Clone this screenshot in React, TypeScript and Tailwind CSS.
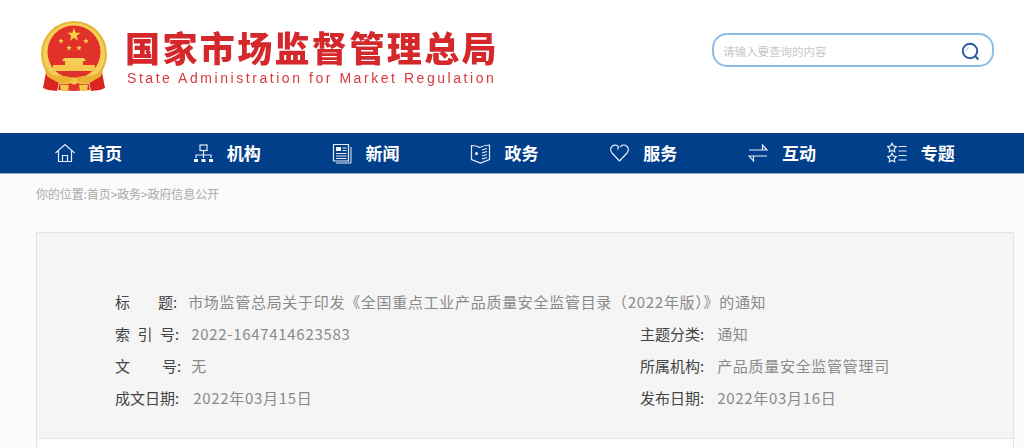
import React from "react";

const CJK = `"Noto Sans CJK SC", "Liberation Sans", sans-serif`;

function Star({ x, y, r, fill = "#f7d34a" }: { x: number; y: number; r: number; fill?: string }) {
  const pts: string[] = [];
  for (let i = 0; i < 10; i++) {
    const a = (Math.PI / 5) * i - Math.PI / 2;
    const rr = i % 2 === 0 ? r : r * 0.4;
    pts.push(`${(x + rr * Math.cos(a)).toFixed(2)},${(y + rr * Math.sin(a)).toFixed(2)}`);
  }
  return <polygon points={pts.join(" ")} fill={fill} />;
}

function Emblem() {
  return (
    <svg width="68" height="72" viewBox="0 0 68 72" className="shrink-0 blur-[0.4px]">
      <path d="M6 52c5 3 9 6 13 10l-2 9-9-1-5-2z" fill="#d9261f" />
      <path d="M62 52c-5 3-9 6-13 10l2 9 9-1 5-2z" fill="#d9261f" />
      <circle cx="34" cy="34" r="33" fill="#e6b335" />
      <circle cx="34" cy="34" r="31" fill="#f5cf58" />
      <circle cx="34" cy="32" r="26.5" fill="#e0322a" />
      <Star x={34} y={15} r={7} />
      <Star x={21} y={21} r={3} />
      <Star x={46} y={21} r={3} />
      <Star x={29} y={28} r={3} />
      <Star x={39} y={28} r={3} />
      <path d="M24 38h20l2 3H22z" fill="#f6cf55" />
      <rect x="25" y="41" width="18" height="4" fill="#f6cf55" />
      <rect x="13" y="45" width="42" height="6" fill="#f4c94d" />
      <path d="M5 50c6 5 13 7 20 6l9 2 9-2c7 1 14-1 20-6l-2 6c-5 4-12 7-19 7l-8-1-8 1c-7 0-14-3-19-7z" fill="#e9b233" />
      <path d="M19 64c5 1 10 0 15-2 5 2 10 3 15 2l1 6-16 1-16-1z" fill="#e3342a" />
      <path d="M20 65h9l-1 6h-7zM39 65h9l-1 6h-7z" fill="#f2c84b" />
      <circle cx="34" cy="61" r="3.5" fill="#f2c84b" />
    </svg>
  );
}

const iconProps = {
  width: 22,
  height: 22,
  viewBox: "0 0 22 22",
  fill: "none",
  stroke: "#e4ecf6",
  strokeWidth: 1.2,
};

function HomeIcon() {
  return (
    <svg {...iconProps}>
      <path d="M1.5 11L11 2.5l9.5 8.5" />
      <path d="M4.5 9v10.500h13V9" />
      <path d="M8.5 19.500v-6h5v6" />
    </svg>
  );
}
function OrgIcon() {
  return (
    <svg {...iconProps}>
      <rect x="7" y="3" width="7" height="5.5" />
      <path d="M10.5 8.500V16M3 16v-3h15v3" />
      <rect x="1" y="17" width="4" height="3" fill="#f2f6fb" stroke="none" />
      <rect x="8.5" y="17" width="4" height="3" fill="#f2f6fb" stroke="none" />
      <rect x="16" y="17" width="4" height="3" fill="#f2f6fb" stroke="none" />
    </svg>
  );
}
function NewsIcon() {
  return (
    <svg {...iconProps}>
      <path d="M1.5 2.500h15v16.500h-15z" />
      <path d="M19 5v16H4" strokeWidth="1" />
      <rect x="4" y="5" width="5" height="4" fill="#f2f6fb" stroke="none" />
      <path d="M10.5 6h4M10.500 8.500h4M4 11.500h10.500M4 14h10.500M4 16.500h10.500" />
    </svg>
  );
}
function GovIcon() {
  return (
    <svg {...iconProps}>
      <path d="M1.5 3.500c3 0 6 .5 8 2 3-1.500 7-2.500 10-2.500v14.500L10.500 21l-9-3.500z" />
      <circle cx="6.5" cy="11.5" r="1.5" fill="#f2f6fb" stroke="none" />
      <path d="M12 8l5-1.500M12 11l5-1.500M12 14l5-1.500M12 17l5-1.500" />
    </svg>
  );
}
function HeartIcon() {
  return (
    <svg {...iconProps}>
      <path d="M10.5 19L3 11c-2-2.300-1.700-5.200.2-6.800 2.100-1.600 5-1.400 6.500.9L8.500 7.500M10.500 19L18 11c2-2.300 1.700-5.200-.2-6.800-2-1.600-4.800-1.400-6.500.6" />
    </svg>
  );
}
function SwapIcon() {
  return (
    <svg {...iconProps}>
      <path d="M1 8h18L14.500 3v5" />
      <path d="M19 14H1l4.500 5v-5" />
    </svg>
  );
}
function StarListIcon() {
  const outline = (cy: number) => {
    const pts: string[] = [];
    for (let i = 0; i < 10; i++) {
      const a = (Math.PI / 5) * i - Math.PI / 2;
      const r = i % 2 === 0 ? 4.6 : 2.4;
      pts.push(`${(5 + r * Math.cos(a)).toFixed(2)},${(cy + r * Math.sin(a)).toFixed(2)}`);
    }
    return <polygon points={pts.join(" ")} />;
  };
  return (
    <svg {...iconProps}>
      {outline(6)}
      {outline(16)}
      <path d="M11.5 4.500h8M11.500 9h8M11.500 13.500h8M11.500 18h8" />
    </svg>
  );
}

const navItems: [string, React.ReactNode][] = [
  ["首页", <HomeIcon />],
  ["机构", <OrgIcon />],
  ["新闻", <NewsIcon />],
  ["政务", <GovIcon />],
  ["服务", <HeartIcon />],
  ["互动", <SwapIcon />],
  ["专题", <StarListIcon />],
];

function Field({
  chars,
  width,
  value,
  gap,
  height = "h-[32px]",
}: {
  chars: string[];
  width: string;
  value: string;
  gap: string;
  height?: string;
}) {
  return (
    <div className={`flex items-center ${height}`}>
      <span className={`flex justify-between text-[#444] tracking-normal ${width}`}>
        {chars.map((c) => (
          <span key={c}>{c}</span>
        ))}
      </span>
      <span className="text-[#444] tracking-normal">:</span>
      <span className={`text-[#8a8a8a] ${gap}`}>{value}</span>
    </div>
  );
}

export default function App() {
  return (
    <div className="w-[1024px] h-[448px] overflow-hidden bg-white" style={{ fontFamily: CJK }}>
      <header className="h-[133px] flex items-start pl-[40px] pr-[30px] pt-[20px] bg-white">
        <Emblem />
        <div className="ml-[17px] pt-[8px]">
          <div className="text-[35px] leading-[38px] font-black text-[#d5282d] tracking-[2.4px] whitespace-nowrap blur-[0.4px]">
            国家市场监督管理总局
          </div>
          <div
            className="mt-[3px] ml-[2px] text-[14px] leading-[18px] text-[#d9393c] tracking-[2.55px] whitespace-nowrap blur-[0.3px]"
            style={{ fontFamily: '"Liberation Sans", sans-serif' }}
          >
            State Administration for Market Regulation
          </div>
        </div>
        <div className="ml-auto mt-[13px] w-[282px] h-[34px] rounded-[15px] border-2 border-[#8bbde6] flex items-center justify-between pl-[9px] pr-[12px] bg-white">
          <span className="mt-[4px] text-[11.5px] text-[#c8c8c8]">请输入要查询的内容</span>
          <svg className="mt-[3px]" width="19" height="19" viewBox="0 0 19 19" fill="none" stroke="#2d5c9c" strokeWidth="2">
            <circle cx="9" cy="9" r="7.2" />
            <path d="M14 14l3.5 3.5" />
            <path d="M5 9a4 4 0 0 1 3-3.500" stroke="#9dbbdc" strokeWidth="1" />
          </svg>
        </div>
      </header>

      <nav className="h-[41px] bg-[#023f8b] border-b border-[#8fa9cc] flex items-center pl-[54px]">
        {navItems.map(([label, icon]) => (
          <div key={label} className="w-[138.8px] shrink-0 flex items-center">
            <span className="w-[34px] flex">{icon}</span>
            <span className="text-[17px] leading-[24px] font-bold text-white">{label}</span>
          </div>
        ))}
      </nav>

      <main className="h-[274px] bg-[#fbfbfb] px-[36px] pt-[11px]">
        <div className="text-[12px] leading-[18px] text-[#aaaaaa] tracking-[-0.1px]">你的位置:首页&gt;政务&gt;政府信息公开</div>
        <section className="mt-[29px] w-[978px] border border-[#dfe3ee] bg-white">
          <div className="h-[206px] bg-[#f5f5f5] border-b border-[#e3e3e3] pl-[78px] pt-[54px] text-[15px] tracking-[0.7px]">
            <Field
              chars={["标", "题"]}
              width="w-[58px]"
              height="h-[31px]"
              value="市场监管总局关于印发《全国重点工业产品质量安全监管目录（2022年版）》的通知"
              gap="ml-[11px]"
            />
            <div className="grid grid-cols-[525px_1fr]">
              <Field chars={["索", "引", "号"]} width="w-[60px]" value="2022-1647414623583" gap="ml-[12px]" />
              <Field chars={["主", "题", "分", "类"]} width="w-[60px]" value="通知" gap="ml-[13px]" />
              <Field chars={["文", "号"]} width="w-[62px]" value="无" gap="ml-[10px]" />
              <Field chars={["所", "属", "机", "构"]} width="w-[60px]" value="产品质量安全监管管理司" gap="ml-[13px]" />
              <Field chars={["成", "文", "日", "期"]} width="w-[60px]" value="2022年03月15日" gap="ml-[14px]" />
              <Field chars={["发", "布", "日", "期"]} width="w-[60px]" value="2022年03月16日" gap="ml-[13px]" />
            </div>
          </div>
          <div className="h-[20px]" />
        </section>
      </main>
    </div>
  );
}
